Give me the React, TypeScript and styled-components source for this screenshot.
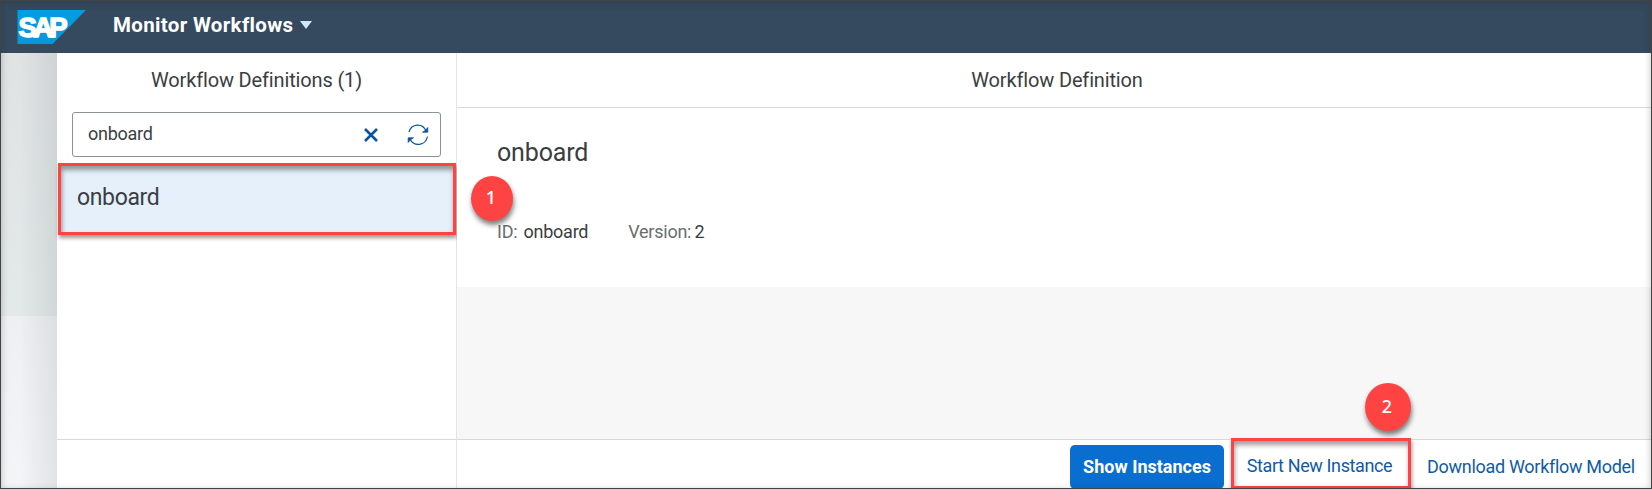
import React from "react";
import styled, { createGlobalStyle } from "styled-components";

const GlobalStyle = createGlobalStyle`
  * { box-sizing: border-box; }
  body { margin: 0; font-family: Roboto, "Liberation Sans", sans-serif; color: #3a3e42; }
  button, input { font-family: inherit; margin: 0; }
`;

const Shell = styled.div`
  position: relative;
  display: flex;
  flex-direction: column;
  width: 1652px;
  height: 489px;
  overflow: hidden;
  background: #fff;
`;

const WindowFrame = styled.div`
  position: absolute;
  inset: 0;
  border: 1px solid #434343;
  box-shadow: inset 0 2px 7px rgba(40, 40, 40, 0.28);
  pointer-events: none;
`;

const ShellBar = styled.header`
  flex: 0 0 53px;
  display: flex;
  align-items: center;
  padding: 0 0 2px 17px;
  background: #354a5f;
  color: #fff;
`;

const Logo = styled.svg`
  display: block;
  width: 70px;
  height: 35px;
  margin-top: 3px;
`;

const AppTitle = styled.h1`
  margin: 0 7px 2px 26px;
  font-size: 20.5px;
  font-weight: 700;
  line-height: 24px;
  letter-spacing: 0.33px;
`;

const Caret = styled.svg`
  width: 12px;
  height: 8px;
  margin-bottom: 1px;
`;

const Body = styled.div`
  flex: 1;
  display: flex;
  min-height: 0;
`;

const Backdrop = styled.div`
  flex: 0 0 57px;
  background:
    linear-gradient(90deg, transparent 35%, rgba(60, 70, 75, 0.1)),
    linear-gradient(180deg, #dfe3e4 0, #e3e8e8 263px, #eeeff2 263px, #f4f5f7 100%);
`;

const Master = styled.aside`
  flex: 0 0 400px;
  display: flex;
  flex-direction: column;
  border-right: 1px solid #e5e5e5;
`;

const Detail = styled.main`
  flex: 1;
  display: flex;
  flex-direction: column;
  min-width: 0;
  background: #f7f7f7;
`;

const PaneHeader = styled.div<{ $ruled?: boolean }>`
  height: 55px;
  flex: none;
  padding: 15px 0 0 ${(p) => (p.$ruled ? "5px" : "0")};
  background: #fff;
  text-align: center;
  font-size: 20px;
  line-height: 24px;
  letter-spacing: -0.15px;
  border-bottom: ${(p) => (p.$ruled ? "1px solid #d9d9d9" : "none")};
`;

const SearchField = styled.div`
  display: flex;
  align-items: center;
  height: 45px;
  margin: 4px 15px 7px;
  padding: 0 11px 0 15px;
  border: 1px solid #89919a;
  border-radius: 3px;
`;

const SearchText = styled.span`
  flex: 1;
  font-size: 18px;
  line-height: 22px;
  letter-spacing: -0.25px;
  padding-bottom: 1px;
`;

const ClearIcon = styled.svg`
  width: 14px;
  height: 14px;
  margin-right: 29px;
`;

const RefreshIcon = styled.svg`
  width: 22px;
  height: 22px;
`;

const highlight = `
  border: 3px solid #ff4343;
  box-shadow: 1px 3px 4px rgba(0, 0, 0, 0.4), inset 1px 4px 5px rgba(0, 0, 0, 0.38);
`;

const ListItem = styled.div`
  height: 72px;
  flex: none;
  margin: -1px 0 0 1px;
  padding: 18px 16px;
  background: #e5f0fa;
  font-size: 23px;
  line-height: 28px;
  letter-spacing: -0.35px;
  ${highlight}
`;

const Footer = styled.footer`
  height: 50px;
  flex: none;
  display: flex;
  justify-content: flex-end;
  margin-top: auto;
  border-top: 1px solid #d9d9d9;
  background: #fff;
`;

const ObjectHeader = styled.section`
  height: 179px;
  flex: none;
  padding: 30px 0 0 40px;
  background: #fff;
`;

const ObjectTitle = styled.h2`
  margin: 0;
  font-size: 25px;
  font-weight: 400;
  line-height: 30px;
  letter-spacing: -0.15px;
`;

const Attributes = styled.div`
  display: flex;
  gap: 40px;
  margin-top: 53px;
  font-size: 18px;
  line-height: 22px;
  letter-spacing: -0.25px;
`;

const Label = styled.span<{ $gap: number }>`
  margin-right: ${(p) => p.$gap}px;
  color: #6a6d70;
`;

const Button = styled.button<{ $kind: "primary" | "marked" | "plain" }>`
  display: block;
  flex: none;
  padding: 0;
  font-size: 18px;
  line-height: 22px;
  white-space: nowrap;
  border: none;
  background: transparent;
  color: #0f5ba6;
  ${(p) =>
    p.$kind === "primary" &&
    `width: 154px; height: 44px; margin: 5px 7px 0 0; border-radius: 5px;
     background: #0a6ed1; color: #fff; font-weight: 700;`}
  ${(p) =>
    p.$kind === "marked" &&
    `width: 180px; height: 51px; margin-top: -2px; padding: 4px 3px 0 0; letter-spacing: -0.38px; ${highlight}`}
  ${(p) => p.$kind === "plain" && `width: 241px; padding: 5px 1px 0 0; letter-spacing: -0.3px;`}
`;

const Callout = styled.div<{ $x: number; $y: number; $w: number; $h: number }>`
  position: absolute;
  left: ${(p) => p.$x}px;
  top: ${(p) => p.$y}px;
  width: ${(p) => p.$w}px;
  height: ${(p) => p.$h}px;
  display: flex;
  align-items: center;
  justify-content: center;
  border-radius: 50%;
  background: #ff4343;
  box-shadow: 1px 4px 5px rgba(0, 0, 0, 0.5);
  color: #fff;
  font-family: "Noto Sans", sans-serif;
  font-size: 18px;
  font-weight: 500;
  padding: 0 2px 3px 0;
`;

export default function App() {
  return (
    <>
      <GlobalStyle />
      <Shell>
        <ShellBar>
          <Logo viewBox="0 0 70 35">
            <defs>
              <linearGradient id="logoFill" x1="0" y1="0" x2="0" y2="1">
                <stop offset="0" stopColor="#00a0e0" />
                <stop offset="1" stopColor="#0a95db" />
              </linearGradient>
            </defs>
            <path d="M0.5 0H69L35.500 34H0.5Z" fill="url(#logoFill)" />
            <text
              x="1.6"
              y="27.2"
              fill="#fff"
              stroke="#fff"
              strokeWidth="1.5"
              fontFamily="Liberation Sans, sans-serif"
              fontWeight="700"
              fontSize="27.5"
              textLength="49"
              lengthAdjust="spacing"
            >
              SAP
            </text>
          </Logo>
          <AppTitle>Monitor Workflows</AppTitle>
          <Caret viewBox="0 0 12 8">
            <path d="M0 0H12L6 8Z" fill="#d1e8ff" />
          </Caret>
        </ShellBar>
        <Body>
          <Backdrop />
          <Master>
            <PaneHeader>Workflow Definitions (1)</PaneHeader>
            <SearchField>
              <SearchText>onboard</SearchText>
              <ClearIcon viewBox="0 0 14 14">
                <path d="M1 1L13 13M13 1L1 13" stroke="#0854a0" strokeWidth="2.6" />
              </ClearIcon>
              <RefreshIcon viewBox="0 0 22 22" fill="none" stroke="#0854a0" strokeWidth="1.2">
                <path d="M2 8C4.500 -0.500 15.500 -1.500 19 7" />
                <path d="M20.800 3.500V8.200H15.500L18 6.800Z" fill="#0854a0" strokeWidth="0.8" />
                <path d="M20.500 12.500C18.500 22 7 23 3 15" />
                <path d="M1.200 18.500V13.800H6.500L4 15.200Z" fill="#0854a0" strokeWidth="0.8" />
              </RefreshIcon>
            </SearchField>
            <ListItem>onboard</ListItem>
            <Footer />
          </Master>
          <Detail>
            <PaneHeader $ruled>Workflow Definition</PaneHeader>
            <ObjectHeader>
              <ObjectTitle>onboard</ObjectTitle>
              <Attributes>
                <span><Label $gap={2}>ID:</Label> onboard</span>
                <span><Label $gap={-1}>Version:</Label> 2</span>
              </Attributes>
            </ObjectHeader>
            <Footer>
              <Button $kind="primary">Show Instances</Button>
              <Button $kind="marked">Start New Instance</Button>
              <Button $kind="plain">Download Workflow Model</Button>
            </Footer>
          </Detail>
        </Body>
        <Callout $x={471} $y={176} $w={42} $h={45}>1</Callout>
        <Callout $x={1365} $y={383} $w={46} $h={48}>2</Callout>
        <WindowFrame />
      </Shell>
    </>
  );
}
